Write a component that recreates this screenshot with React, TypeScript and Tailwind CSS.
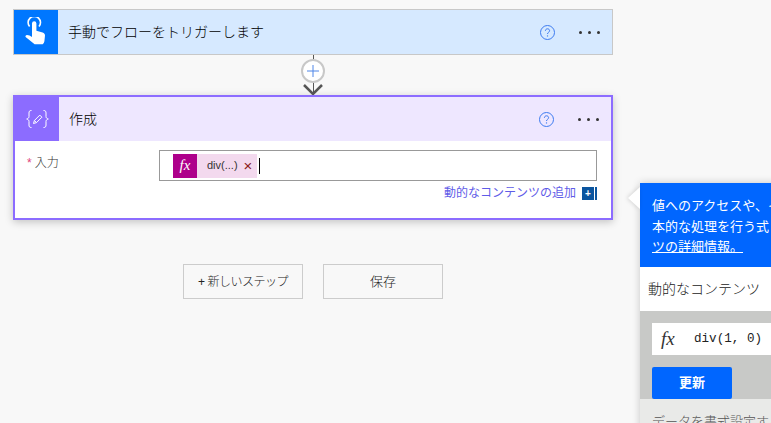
const font = "font-['Liberation_Sans','Noto_Sans_CJK_JP',sans-serif]";

function HelpIcon() {
  return (
    <svg width="15" height="15" viewBox="0 0 15 15" fill="none">
      <circle cx="7.500" cy="7.500" r="7" stroke="#3d7bf0" strokeWidth="1" />
      <path d="M5.400 5.800c0-1.200.9-2 2.100-2s2.100.8 2.100 1.900c0 1.600-2.100 1.600-2.100 3.300" stroke="#3d7bf0" strokeWidth="1" />
      <circle cx="7.500" cy="10.900" r=".7" fill="#3d7bf0" />
    </svg>
  );
}

function Dots() {
  return (
    <div className="flex gap-[6px]">
      <span className="w-[3px] h-[3px] rounded-full bg-[#333]" />
      <span className="w-[3px] h-[3px] rounded-full bg-[#333]" />
      <span className="w-[3px] h-[3px] rounded-full bg-[#333]" />
    </div>
  );
}

function TouchIcon() {
  return (
    <svg width="22" height="30" viewBox="0 0 22 30" fill="none">
      <path d="M4.600 9.600a6.200 6.200 0 1 1 9.400 0" stroke="#fff" strokeWidth="1.600" />
      <path d="M7 6.500a2.200 2.200 0 0 1 4.400 0v7.200l6.200 1.800c1.600.5 2.400 1.600 2.400 3.100l-.6 5.600c-.2 1.200-.8 2.300-1.700 3.100H9.600L.6 19.900c-.5-.9.2-2 1.400-2 1.700 0 3.400.8 5 2.100z" fill="#fff" />
    </svg>
  );
}

function ComposeIcon() {
  return (
    <svg width="23" height="18" viewBox="0 0 23 18" fill="none">
      <path d="M5.500 .5C3.300 .5 3 1.500 3 3v3.500c0 1.200-.6 2-2.300 2.500C2.400 9.500 3 10.300 3 11.500V15c0 1.500.3 2.500 2.500 2.500" stroke="#fff" strokeWidth="1" />
      <path d="M17.500 .5c2.200 0 2.500 1 2.500 2.500v3.500c0 1.200.6 2 2.300 2.500-1.700.5-2.300 1.300-2.300 2.500V15c0 1.500-.3 2.500-2.500 2.500" stroke="#fff" strokeWidth="1" />
      <path d="M7.500 13.500l.9-3 5.400-5.400 2.100 2.100-5.400 5.400zM8.400 10.500l2.100 2.100" stroke="#fff" strokeWidth="1" strokeLinejoin="round" />
    </svg>
  );
}

export default function App() {
  return (
    <div className={`relative w-[771px] h-[423px] overflow-hidden bg-[#f8f8f8] font-light ${font}`}>
      <div className="w-[600px] ml-[13px] pt-[9px] flex flex-col">
        <div className="h-[46px] flex items-stretch border border-[#c8c8c8] bg-[#d6e9ff]">
          <div className="w-[44px] bg-[#0077ff] flex items-center justify-center">
            <TouchIcon />
          </div>
          <div className="flex-1 pl-[10px] flex items-center text-[14px] text-[#000]">手動でフローをトリガーします</div>
          <div className="pr-[12px] flex items-center gap-[24px]">
            <HelpIcon />
            <Dots />
          </div>
        </div>

        <div className="h-[40px] flex flex-col items-center relative">
          <div className="w-px flex-1 bg-[#555]" />
          <svg width="20" height="12" viewBox="0 0 20 12" fill="none" className="absolute bottom-0 left-[290px]">
            <path d="M1 2l9 9 9-9" stroke="#555" strokeWidth="2.500" />
          </svg>
          <div className="absolute top-[4px] left-[288px] w-[24px] h-[24px] rounded-full bg-white border-2 border-[#c8c8c8] flex items-center justify-center">
            <svg width="12" height="12" viewBox="0 0 12 12" fill="none">
              <path d="M6 0v12M0 6h12" stroke="#4f86e8" strokeWidth="1" />
            </svg>
          </div>
        </div>

        <div className="h-[125px] flex flex-col border-2 border-[#8c6cff] bg-white shadow-[0_2px_8px_rgba(0,0,0,0.22)]">
          <div className="h-[44px] flex items-stretch bg-[#eee7ff]">
            <div className="w-[44px] bg-[#8c6cff] flex items-center justify-center">
              <ComposeIcon />
            </div>
            <div className="flex-1 pl-[10px] flex items-center text-[14px] text-[#000]">作成</div>
            <div className="pr-[12px] flex items-center gap-[24px]">
              <HelpIcon />
              <Dots />
            </div>
          </div>
          <div className="flex pt-[9px]">
            <div className="w-[144px] pl-[12px] pt-[4px] text-[12px] text-[#333]">
              <span className="text-[#e0447c] mr-[3px]">*</span>入力
            </div>
            <div className="flex-1 pr-[14px] flex flex-col items-end">
              <div className="w-full h-[31px] border border-[#999] flex items-center pl-[13px]">
                <div className="h-[24px] w-[24px] bg-[#ae008b] text-white flex items-center justify-center font-['Liberation_Serif',serif] italic text-[15px]">fx</div>
                <div className="h-[24px] w-[60px] bg-[#f3d9ee] flex items-center pl-[10px] text-[11px] text-[#333]">
                  div(...)
                  <span className="ml-[6px] text-[15px] leading-none text-[#8a1a1a]">×</span>
                </div>
                <div className="ml-[2px] w-px h-[16px] bg-black" />
              </div>
              <div className="mt-[3px] flex items-center gap-[6px]">
                <span className="text-[12px] font-normal text-[#5f5ce8]">動的なコンテンツの追加</span>
                <div className="flex gap-px">
                  <div className="w-[12px] h-[13px] bg-[#0b559f] text-white text-[10px] font-bold leading-[13px] text-center">+</div>
                  <div className="w-[2px] h-[13px] bg-[#0b559f]" />
                </div>
              </div>
            </div>
          </div>
        </div>

        <div className="mt-[44px] flex gap-[20px] ml-[170px]">
          <div className="w-[120px] h-[35px] border border-[#ccc] flex items-center justify-center text-[12px] tracking-[-0.5px] text-[#222]">+ 新しいステップ</div>
          <div className="w-[120px] h-[35px] border border-[#ccc] flex items-center justify-center text-[13px] text-[#222]">保存</div>
        </div>
      </div>

      <div className="absolute left-[640px] top-[183px] w-[340px] h-[260px] bg-white shadow-[0_0_8px_rgba(0,0,0,0.2)]">
        <div className="absolute -left-[12px] top-[4px] w-0 h-0 border-y-[11px] border-y-transparent border-r-[12px] border-r-white drop-shadow-[-1px_0_2px_rgba(0,0,0,0.15)]" />
        <div className="h-[84px] bg-[#0066ff] pl-[12px] pt-[13px] text-[13px] font-normal leading-[20.5px] text-white whitespace-nowrap">
          <div>値へのアクセスや、イ</div>
          <div>本的な処理を行う式</div>
          <div className="underline">ツの詳細情報。</div>
        </div>
        <div className="h-[44px] pl-[8px] flex items-center text-[14px] text-[#222]">動的なコンテンツ</div>
        <div className="h-[88px] bg-[#c8c9c7] pl-[12px] pt-[12px]">
          <div className="h-[32px] bg-white flex items-center">
            <span className="w-[42px] pl-[9px] font-['Liberation_Serif',serif] italic text-[19px] text-[#333]">fx</span>
            <span className="font-['Liberation_Mono','DejaVu_Sans_Mono',monospace] font-normal text-[12.6px] text-[#222]">div(1, 0)</span>
          </div>
          <div className="mt-[12px] w-[80px] h-[32px] rounded-[2px] bg-[#0066ff] text-white text-[13px] font-bold flex items-center justify-center">更新</div>
        </div>
        <div className="h-[44px] bg-[#e9eae8] pl-[12px] pt-[13px] text-[13px] text-[#555] whitespace-nowrap">データを書式設定する</div>
      </div>
    </div>
  );
}
